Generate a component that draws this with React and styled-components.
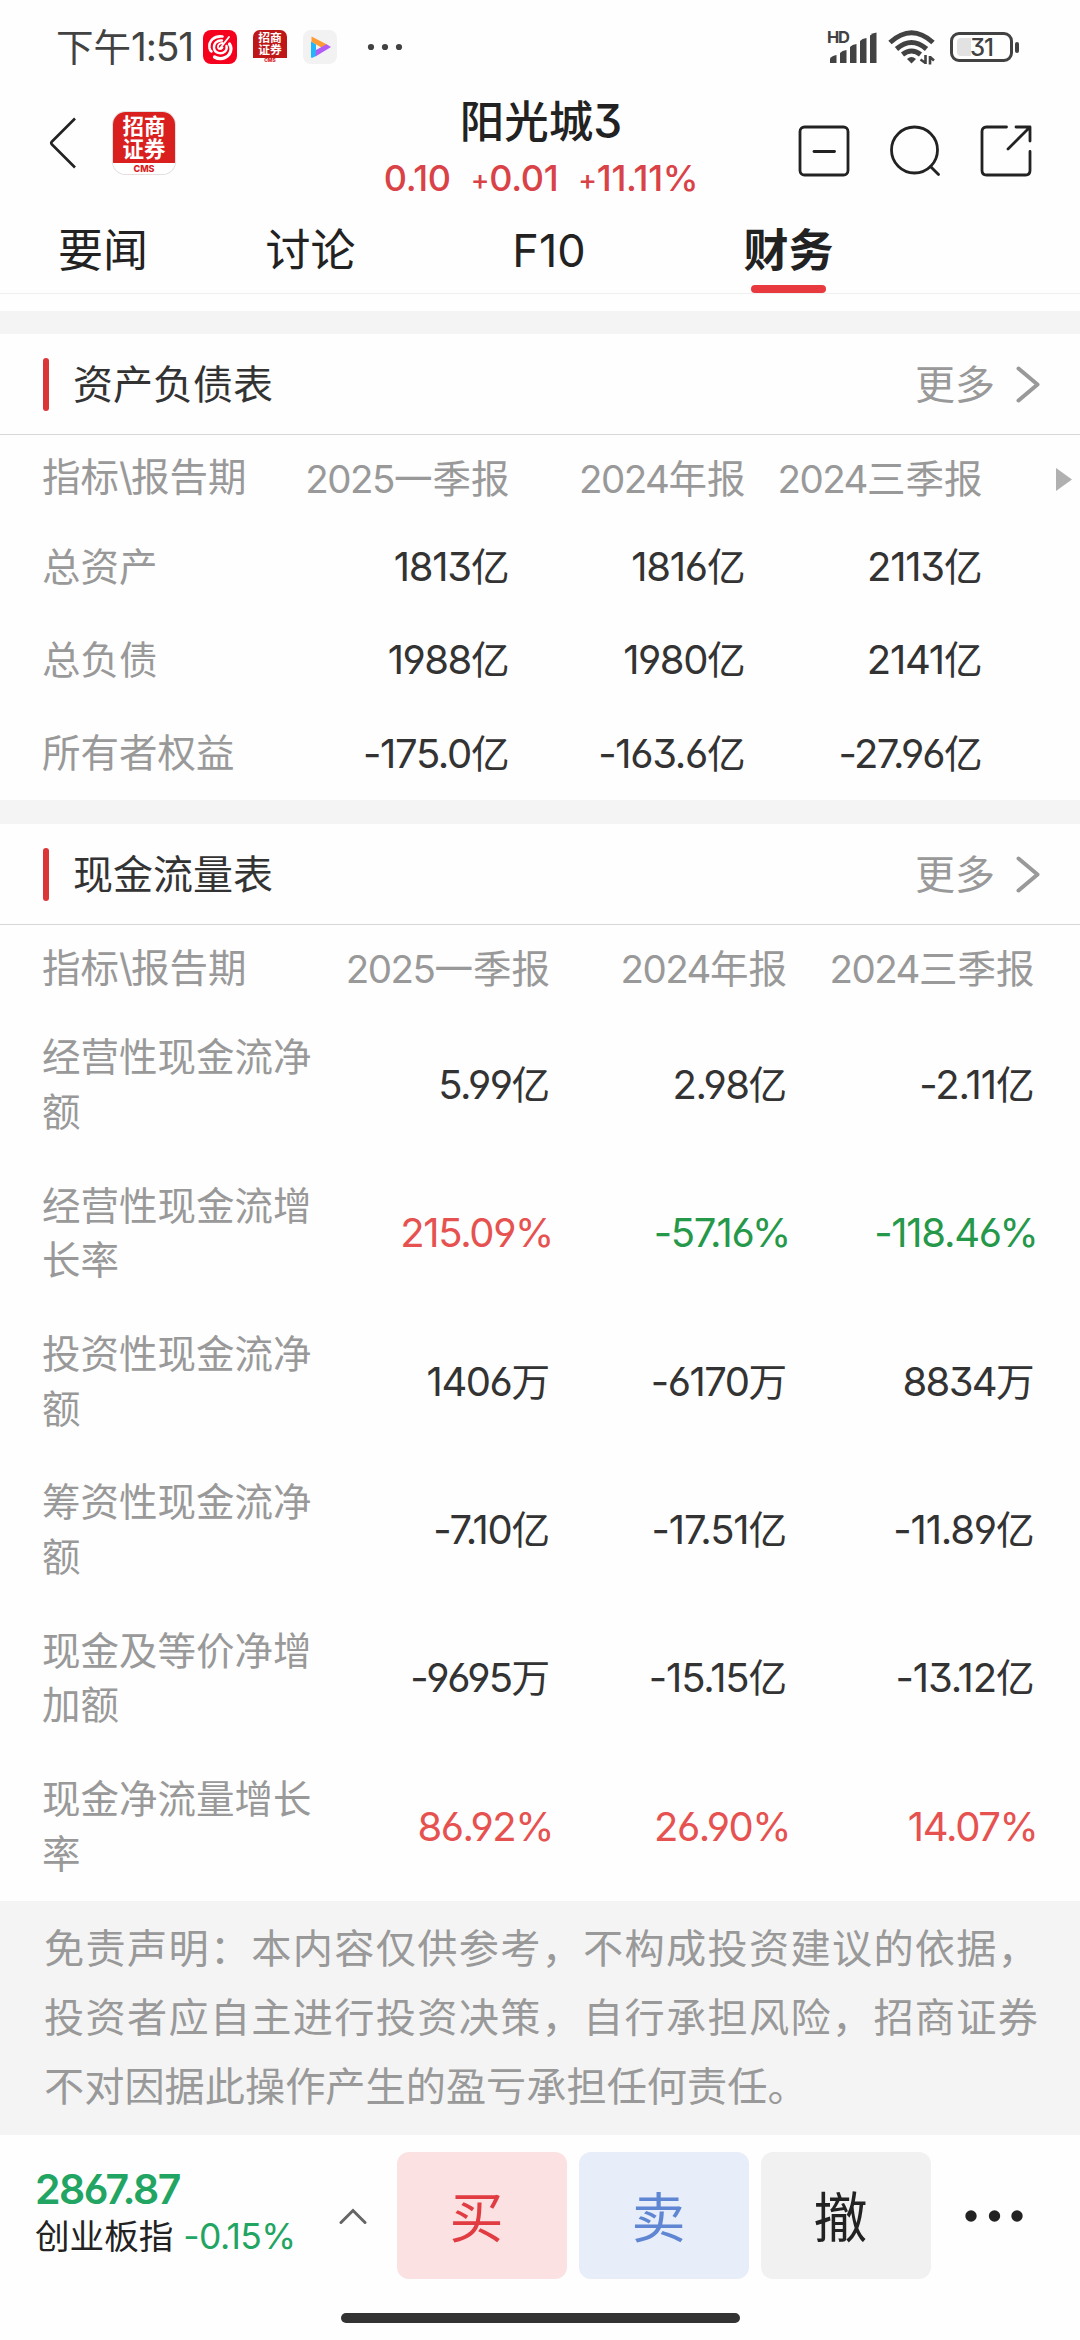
import styled, { createGlobalStyle } from "styled-components";

const balance = {
  title: "资产负债表",
  scrollable: true,
  columns: "232px 235.5px 236px 237px",
  periods: [
    ["2025", "一季报"],
    ["2024", "年报"],
    ["2024", "三季报"],
  ],
  rows: [
    { label: "总资产", values: ["1813亿", "1816亿", "2113亿"] },
    { label: "总负债", values: ["1988亿", "1980亿", "2141亿"] },
    { label: "所有者权益", values: ["-175.0亿", "-163.6亿", "-27.96亿"] },
  ],
};

const cashflow = {
  title: "现金流量表",
  tall: true,
  columns: "280px 228px 237px 247.5px",
  periods: [
    ["2025", "一季报"],
    ["2024", "年报"],
    ["2024", "三季报"],
  ],
  rows: [
    { label: "经营性现金流净额", values: ["5.99亿", "2.98亿", "-2.11亿"] },
    {
      label: "经营性现金流增长率",
      values: ["215.09%", "-57.16%", "-118.46%"],
    },
    { label: "投资性现金流净额", values: ["1406万", "-6170万", "8834万"] },
    { label: "筹资性现金流净额", values: ["-7.10亿", "-17.51亿", "-11.89亿"] },
    { label: "现金及等价净增加额", values: ["-9695万", "-15.15亿", "-13.12亿"] },
    { label: "现金净流量增长率", values: ["86.92%", "26.90%", "14.07%"] },
  ],
};

const valueColor = (value) => {
  if (!value.endsWith("%")) return "#333333";
  return value.startsWith("-") ? "#25984a" : "#e65250";
};

// the "1" is much narrower than the other digits, so loosen numbers full of it
const tracking = (number) => {
  const ones = number.split("1").length - 1;
  const point = number.includes(".") ? 0.2 : 0;
  return -1.7 + point + ones / number.length;
};

function Value({ value }) {
  const number = value.replace(/[亿万]/, "");
  const unit = value.slice(number.length);
  return (
    <Cell $color={valueColor(value)} $percent={!unit}>
      <Digits $tracking={tracking(number)}>{number}</Digits>
      {unit}
    </Cell>
  );
}

function Report({ data }) {
  return (
    <Section>
      <SectionHead>
        <Mark />
        <SectionTitle>{data.title}</SectionTitle>
        <More>更多</More>
        <svg width="26" height="38" viewBox="0 0 26 38">
          <path
            d="M3.500 3.500 22.500 19.500 3.500 35.500"
            fill="none"
            stroke="#999"
            strokeWidth="4"
            strokeLinecap="round"
            strokeLinejoin="round"
          />
        </svg>
      </SectionHead>
      <PeriodRow $columns={data.columns}>
        <Label>
          指标<Slash>\</Slash>报告期
        </Label>
        {data.periods.map(([year, name]) => (
          <Period key={year + name}>
            <Year>{year}</Year>
            {name}
          </Period>
        ))}
        {data.scrollable ? (
          <Arrow width="16" height="23" viewBox="0 0 16 23">
            <path d="M0 0 16 11.5 0 23Z" fill="#b0b0b0" />
          </Arrow>
        ) : null}
      </PeriodRow>
      {data.rows.map((row) => (
        <Row key={row.label} $columns={data.columns} $tall={data.tall}>
          <Label>{row.label}</Label>
          {row.values.map((value) => (
            <Value key={value} value={value} />
          ))}
        </Row>
      ))}
    </Section>
  );
}

function App() {
  return (
    <>
      <GlobalStyle />
      <Screen>
        <StatusBar>
          <Clock>
            下午<ClockDigits>1:51</ClockDigits>
          </Clock>
          <AppIcons>
            <svg width="34" height="34" viewBox="0 0 34 34">
              <rect width="34" height="34" rx="8" fill="#f5001d" />
              <g fill="none" stroke="#fff" strokeLinecap="round">
                <path
                  d="M19.500 6.500C11 5.500 5.500 11 6.500 18c.3 1.800 1 3 2 3.500"
                  strokeWidth="2.600"
                />
                <path
                  d="M11.500 27c7 4 16 0 16.500-8 0-2-.5-3.500-1.500-5"
                  strokeWidth="3.200"
                />
                <path
                  d="M19 10.500c-5-.5-8.500 3-8 7.500.5 5 7 7 11 3.500 1.500-1.500 2-3.500 1.500-5.500"
                  strokeWidth="2.400"
                />
                <path
                  d="M26 7 17 18.500M19.500 13c-3 0-5 2-4.500 4.500.5 2 3.500 2 4.500 0"
                  strokeWidth="1.900"
                />
              </g>
            </svg>
            <Badge $size={34} $color="#bf1717">
              <BadgeText $size={11.8}>
                招商
                <br />
                证券
              </BadgeText>
              <BadgeFoot $size={5}>CMS</BadgeFoot>
            </Badge>
            <svg width="34" height="34" viewBox="0 0 34 34">
              <rect width="34" height="34" rx="8" fill="#f2f2f3" />
              <path d="M8.500 6.500 24 14.500 19.500 18 8.500 12Z" fill="#ff9b35" />
              <path d="M8 11.500 13 14.500V26L9 28Q8 28 8 26.500Z" fill="#22b8f8" />
              <path d="M13 20 23.500 14.300 28 17 12.500 26.500Z" fill="#b05cf5" />
            </svg>
          </AppIcons>
          <svg width="36" height="8" viewBox="0 0 36 8">
            <g fill="#424242">
              <circle cx="4" cy="4" r="3.100" />
              <circle cx="18" cy="4" r="3.100" />
              <circle cx="32" cy="4" r="3.100" />
            </g>
          </svg>
          <Signals>
            <Bars width="52" height="46" viewBox="0 -6 52 46">
              <text
                x="0"
                y="13"
                fill="#424242"
                fontFamily="Inter, sans-serif"
                fontSize="16.500"
                fontWeight="700"
                textLength="23"
              >
                HD
              </text>
              <g fill="#424242">
                <path d="M3 33V28.500Q5 25.500 9.500 25V33Z" />
                <path d="M13 33V23Q15 20.500 19.500 20V33Z" />
                <path d="M23 33V17Q25 14.500 29.500 14V33Z" />
                <path d="M33 33V11Q35 8.500 39.500 8V33Z" />
                <path d="M43 33V5.500Q45 3 49.500 2.500V33Z" />
              </g>
            </Bars>
            <svg width="48" height="36" viewBox="0 0 48 36">
              <g fill="none" stroke="#424242" strokeWidth="5">
                <path d="M2 13.500Q23.500-6 45 13.500" />
                <path d="M8.500 20Q23.500 7 38.500 20" />
                <path d="M14.500 25.500Q23.500 18.500 32.500 25.500" />
              </g>
              <path d="M19 30q4.500-4 9 0L23.500 34.500Z" fill="#424242" />
              <g fill="none" stroke="#424242" strokeWidth="2.600">
                <path d="M37.500 26V35M37.500 34 32.500 30.500M42 35.500V27M42 28 46 31.500" />
              </g>
            </svg>
            <Battery>
              <BatteryLevel />
              <BatteryText>31</BatteryText>
            </Battery>
            <BatteryCap />
          </Signals>
        </StatusBar>

        <Header>
          <svg width="28" height="54" viewBox="0 0 28 54">
            <path
              d="M26 2.500 3 25.500Q1.500 27 3 28.500L26 51.500"
              fill="none"
              stroke="#222"
              strokeWidth="2.600"
            />
          </svg>
          <HomeLink>
            <Badge $size={62} $color="#d9201f" $outlined>
              <BadgeText $size={21.5}>
                招商
                <br />
                证券
              </BadgeText>
              <BadgeFoot $size={9}>CMS</BadgeFoot>
            </Badge>
          </HomeLink>
          <Stock>
            <StockName>
              阳光城<NameDigit>3</NameDigit>
            </StockName>
            <Quote>
              <span>0.10</span>
              <span>
                <Sign>+</Sign>0.01
              </span>
              <span>
                <Sign>+</Sign>11.11%
              </span>
            </Quote>
          </Stock>
          <Tools>
            <svg width="52" height="52" viewBox="0 0 52 52">
              <g
                fill="none"
                stroke="#222"
                strokeWidth="2.800"
                strokeLinecap="round"
              >
                <rect x="2" y="2" width="48" height="48" rx="4.500" />
                <path d="M16 26.500H36.500" />
              </g>
            </svg>
            <svg width="52" height="52" viewBox="0 0 52 52">
              <g
                fill="none"
                stroke="#222"
                strokeWidth="2.800"
                strokeLinecap="round"
              >
                <circle cx="25.500" cy="25" r="23" />
                <path d="M41.500 41.500 49.500 49.500" />
              </g>
            </svg>
            <svg width="52" height="52" viewBox="0 0 52 52">
              <g
                fill="none"
                stroke="#222"
                strokeWidth="2.800"
                strokeLinecap="round"
                strokeLinejoin="round"
              >
                <path d="M26.500 2H6.500Q2 2 2 6.500V45.500Q2 50 6.500 50H45.500Q50 50 50 45.500V26.500" />
                <path d="M36 2H50V16M49 3 28 24" />
              </g>
            </svg>
          </Tools>
        </Header>

        <Tabs>
          <Tab $width={206}>要闻</Tab>
          <Tab $width={209}>讨论</Tab>
          <Tab $width={268}>F10</Tab>
          <Tab $width={211} $active>
            财务
          </Tab>
        </Tabs>

        <Gap $height={23} />
        <Report data={balance} />
        <Gap $height={24} />
        <Report data={cashflow} />

        <Disclaimer>
          免责声明：本内容仅供参考，不构成投资建议的依据，投资者应自主进行投资决策，自行承担风险，招商证券不对因据此操作产生的盈亏承担任何责任。
        </Disclaimer>

        <TradeBar>
          <Index>
            <IndexValue>2867.87</IndexValue>
            <IndexName>
              创业板指<IndexChange>-0.15%</IndexChange>
            </IndexName>
          </Index>
          <svg width="28" height="18" viewBox="0 0 28 18">
            <path
              d="M2 15.500 14 3.500 26 15.500"
              fill="none"
              stroke="#666"
              strokeWidth="3"
              strokeLinecap="round"
            />
          </svg>
          <Actions>
            <Action $bg="#fce1e2" $color="#e03c42">
              买
            </Action>
            <Action $bg="#e7edf9" $color="#5f86d2">
              卖
            </Action>
            <Action $bg="#f1f1f1" $color="#222222">
              撤
            </Action>
          </Actions>
          <svg width="60" height="12" viewBox="0 0 60 12">
            <g fill="#222">
              <circle cx="6" cy="6" r="5.700" />
              <circle cx="29.500" cy="6" r="5.700" />
              <circle cx="52" cy="6" r="5.700" />
            </g>
          </svg>
        </TradeBar>
        <HomeIndicator />
      </Screen>
    </>
  );
}

export default App;

const GlobalStyle = createGlobalStyle`
  * {
    box-sizing: border-box;
  }
  body {
    margin: 0;
    background: #fff;
    font-family: Inter, "Noto Sans CJK SC", sans-serif;
    font-feature-settings: "cv03", "cv04", "cv09";
  }
  svg {
    display: block;
    flex: none;
  }
`;

const Screen = styled.main`
  display: flex;
  flex-direction: column;
  width: 1080px;
  height: 2340px;
  overflow: hidden;
  background: #fefefe;
  color: #222;
`;

const StatusBar = styled.div`
  display: flex;
  align-items: center;
  height: 94px;
  padding: 0 61px 0 56px;
  color: #424242;
`;

const Clock = styled.div`
  width: 147px;
  font-size: 37.5px;
  line-height: 50px;
  white-space: nowrap;
`;

const ClockDigits = styled.span`
  font-size: 39px;
  letter-spacing: -1.2px;
`;

const AppIcons = styled.div`
  display: flex;
  gap: 16px;
  margin-right: 30px;
`;

const Badge = styled.div`
  display: flex;
  flex-direction: column;
  align-items: center;
  justify-content: space-between;
  flex: none;
  width: ${(props) => props.$size}px;
  height: ${(props) => props.$size}px;
  border-radius: ${(props) => props.$size * 0.2}px;
  overflow: hidden;
  background: linear-gradient(${(props) => props.$color} 83%, #ffffff 83%);
  box-shadow: ${(props) => (props.$outlined ? "0 0 0 1px #e4dede" : "none")};
`;

const BadgeText = styled.div`
  padding-top: ${(props) => props.$size * 0.15}px;
  font-size: ${(props) => props.$size}px;
  line-height: 1.06;
  font-weight: 700;
  color: #fff;
`;

const BadgeFoot = styled.div`
  font-size: ${(props) => props.$size}px;
  line-height: 1.15;
  font-weight: 800;
  color: #d9201f;
`;

const Signals = styled.div`
  display: flex;
  align-items: center;
  margin-left: auto;
`;

const Bars = styled.svg`
  margin-right: 9px;
`;

const Battery = styled.div`
  position: relative;
  display: flex;
  align-items: center;
  justify-content: center;
  width: 63px;
  height: 30px;
  margin-left: 14px;
  border: 3px solid #424242;
  border-radius: 9px;
`;

const BatteryLevel = styled.div`
  position: absolute;
  left: 4px;
  top: 3px;
  width: 14px;
  height: 18px;
  border-radius: 4px 0 0 4px;
  background: #e2e2e2;
`;

const BatteryText = styled.span`
  position: relative;
  font-size: 24px;
  font-weight: 500;
  letter-spacing: -1px;
`;

const BatteryCap = styled.div`
  width: 4px;
  height: 11px;
  margin-left: 2px;
  border-radius: 2px;
  background: #424242;
`;

const Header = styled.header`
  display: flex;
  align-items: center;
  height: 116px;
  padding: 0 48px 18px 49px;
`;

const HomeLink = styled.div`
  margin-left: 36px;
`;

const Stock = styled.div`
  display: flex;
  flex-direction: column;
  align-items: center;
  width: 320px;
  margin: 15px 97px 0 206px;
`;

const StockName = styled.h1`
  margin: 0;
  font-size: 44.5px;
  line-height: 56px;
  font-weight: 500;
  white-space: nowrap;
`;

const NameDigit = styled.span`
  font-size: 46px;
`;

const Quote = styled.div`
  display: flex;
  gap: 20px;
  font-size: 36px;
  line-height: 56px;
  font-weight: 500;
  letter-spacing: -0.3px;
  color: #d94247;
  white-space: nowrap;
`;

const Sign = styled.span`
  position: relative;
  top: -1px;
  font-size: 28px;
`;

const Tools = styled.div`
  display: flex;
  gap: 39px;
  margin-top: 16px;
`;

const Tabs = styled.nav`
  display: flex;
  height: 84px;
  border-bottom: 1px solid #f0f0f0;
`;

const Tab = styled.div`
  position: relative;
  width: ${(props) => props.$width}px;
  font-size: 45px;
  line-height: 82px;
  text-align: center;
  font-weight: ${(props) => (props.$active ? 700 : 400)};

  &::after {
    content: "";
    display: ${(props) => (props.$active ? "block" : "none")};
    position: absolute;
    left: 50%;
    bottom: 0;
    width: 75px;
    height: 8px;
    margin-left: -38px;
    border-radius: 4px;
    background: #e8393e;
  }
`;

const Gap = styled.div`
  flex: none;
  height: ${(props) => props.$height}px;
  background: #f4f4f4;

  ${Tabs} + & {
    margin-top: 17px;
  }
`;

const Section = styled.section`
  flex: none;
`;

const SectionHead = styled.div`
  display: flex;
  align-items: center;
  height: 101px;
  padding: 0 39px 0 43px;
  border-bottom: 1px solid #d8d8d8;
`;

const Mark = styled.div`
  width: 6px;
  height: 53px;
  border-radius: 3px;
  background: #dc3538;
`;

const SectionTitle = styled.h2`
  flex: 1;
  margin: 1px 0 0 24px;
  font-size: 40px;
  line-height: 60px;
  font-weight: 400;
  color: #333;
`;

const More = styled.span`
  margin: 1px 20px 0 0;
  font-size: 40px;
  line-height: 60px;
  color: #999;
`;

const Row = styled.div`
  display: grid;
  grid-template-columns: ${(props) => props.$columns};
  align-items: center;
  height: ${(props) => (props.$tall ? 148.4 : 93.3)}px;
  padding-left: 42px;
`;

const PeriodRow = styled(Row)`
  position: relative;
  height: 85.4px;
`;

const Label = styled.div`
  font-size: 38.5px;
  line-height: 54.7px;
  color: #999;
`;

const Slash = styled.span`
  letter-spacing: -2px;
`;

const Period = styled.div`
  padding-top: 2px;
  font-size: 38.5px;
  line-height: 54px;
  text-align: right;
  color: #999;
  white-space: nowrap;
`;

const Year = styled.span`
  letter-spacing: -1.5px;
`;

const Cell = styled.div`
  margin-right: ${(props) => (props.$percent ? -3 : 0)}px;
  font-size: 38.6px;
  line-height: 54px;
  text-align: right;
  color: ${(props) => props.$color};
  white-space: nowrap;
`;

const Digits = styled.span`
  font-size: 40px;
  letter-spacing: ${(props) => props.$tracking}px;
`;

const Arrow = styled.svg`
  position: absolute;
  right: 8px;
  top: 33px;
`;

const Disclaimer = styled.p`
  flex: none;
  height: 234px;
  margin: 0;
  padding: 13px 42px 0 44px;
  background: #f4f4f4;
  font-size: 40.2px;
  line-height: 69px;
  text-align: justify;
  color: #999;
`;

const TradeBar = styled.footer`
  display: flex;
  align-items: center;
  flex: none;
  height: 161px;
  padding-left: 35px;
`;

const Index = styled.div`
  width: 304px;
  padding-bottom: 4px;
`;

const IndexValue = styled.div`
  font-size: 41px;
  line-height: 46px;
  font-weight: 600;
  letter-spacing: -1.5px;
  color: #22a562;
`;

const IndexName = styled.div`
  font-size: 34.6px;
  line-height: 48px;
  white-space: nowrap;
`;

const IndexChange = styled.span`
  margin-left: 10px;
  font-size: 35.5px;
  letter-spacing: -0.6px;
  color: #22a562;
`;

const Actions = styled.div`
  display: flex;
  gap: 12px;
  margin: 0 34px 0 30px;
`;

const Action = styled.button`
  width: 170px;
  height: 127px;
  padding: 0 11px 3px 0;
  border: none;
  border-radius: 12px;
  background: ${(props) => props.$bg};
  color: ${(props) => props.$color};
  font-family: inherit;
  font-size: 54px;
`;

const HomeIndicator = styled.div`
  flex: none;
  align-self: center;
  width: 399px;
  height: 10px;
  margin-top: 17px;
  border-radius: 5px;
  background: #333;
`;
